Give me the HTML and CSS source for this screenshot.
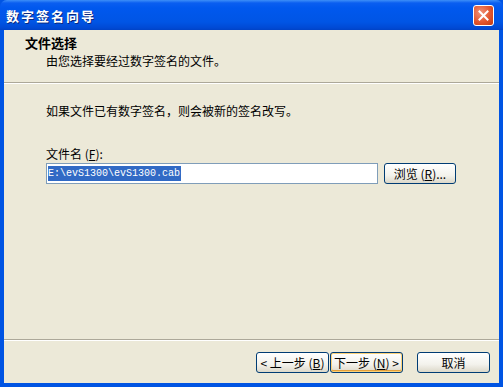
FILE: index.html
```html
<!DOCTYPE html>
<html lang="zh-CN">
<head>
    <meta charset="UTF-8">
    <title>数字签名向导</title>
    <link rel="stylesheet" href="styles.css">
</head>
<body>
    <div class="window">
        <div class="titlebar">
            <span class="title">数字签名向导</span>
            <button class="close" aria-label="关闭">
                <svg width="11" height="11" viewBox="0 0 11 11">
                    <path d="M1.5 1.5 L9.5 9.5 M9.5 1.5 L1.5 9.5" stroke="#fff" stroke-width="2" stroke-linecap="square"/>
                </svg>
            </button>
        </div>

        <div class="client">
            <div class="header">
                <div class="head-title">文件选择</div>
                <div class="head-sub">由您选择要经过数字签名的文件。</div>
            </div>
            <div class="etched"></div>

            <div class="content">
                <p class="note">如果文件已有数字签名，则会被新的签名改写。</p>
                <label class="label" for="fileName">文件名 (<u>F</u>):</label>
                <div class="file-row">
                    <div class="input" id="fileName"><span class="sel">E:\evS1300\evS1300.cab</span></div>
                    <button class="btn browse">浏览 (<u>R</u>)...</button>
                </div>
            </div>

            <div class="etched"></div>
            <div class="footer">
                <button class="btn">&lt; 上一步 (<u>B</u>)</button>
                <button class="btn default">下一步 (<u>N</u>) &gt;</button>
                <button class="btn cancel">取消</button>
            </div>
        </div>
    </div>
</body>
</html>
```

FILE: styles.css
```css
* {
    box-sizing: border-box;
}
html, body {
    margin: 0;
    padding: 0;
}
body {
    width: 503px;
    height: 387px;
    font-family: "Noto Sans CJK SC", "DejaVu Sans", sans-serif;
    font-size: 12px;
    color: #000;
    overflow: hidden;
}
.window {
    width: 503px;
    height: 387px;
    display: flex;
    flex-direction: column;
    background: #0054e3;
    padding: 0 4px 4px 4px;
}
.titlebar {
    height: 30px;
    margin: 0 -4px;
    padding: 0 9px 0 6px;
    display: flex;
    align-items: center;
    justify-content: space-between;
    background: linear-gradient(#3d8ff8 0, #0a5ef0 3px, #0058ee 8px, #0055e5 22px, #0049d4 28px, #0042c6 30px);
    border-radius: 7px 7px 0 0;
}
.title {
    color: #fff;
    font-weight: bold;
    font-size: 13px;
    letter-spacing: 2px;
    text-shadow: 1px 1px 0 #0a2a80;
}
.close {
    width: 21px;
    height: 21px;
    padding: 0;
    border: 1px solid #fff;
    border-radius: 3px;
    background: radial-gradient(circle at 35% 35%, #f0937a 0, #e2562f 55%, #c1390f 100%);
    display: flex;
    align-items: center;
    justify-content: center;
}
.client {
    flex: 1;
    display: flex;
    flex-direction: column;
    background: #ece9d8;
}
.header {
    height: 52px;
    padding: 5px 0 0 21px;
}
.head-title {
    font-weight: bold;
    font-size: 13px;
    line-height: 16px;
}
.head-sub {
    padding-left: 21px;
    margin-top: 3px;
    line-height: 14px;
}
.etched {
    height: 2px;
    border-top: 1px solid #aca899;
    border-bottom: 1px solid #fff;
}
.content {
    flex: 1;
    padding: 20px 0 0 42px;
}
.note {
    margin: 0 0 29px 0;
    line-height: 14px;
}
.label {
    display: block;
    line-height: 14px;
    margin-bottom: 2px;
}
.file-row {
    display: flex;
    align-items: center;
    gap: 6px;
}
.input {
    width: 332px;
    height: 21px;
    border: 1px solid #7f9db9;
    background: #fff;
    padding: 2px 0 0 1px;
    line-height: 15px;
    font-family: "Liberation Mono", "DejaVu Sans Mono", monospace;
    font-size: 10px;
}
.sel {
    background: #316ac5;
    color: #fff;
    padding: 2px 1px 2px 0;
}
.btn {
    font-family: inherit;
    font-size: 12px;
    height: 21px;
    width: 73px;
    padding: 0;
    border: 1px solid #003c74;
    border-radius: 3px;
    background: linear-gradient(#ffffff, #f3f2ec 60%, #dcd8c9);
    color: #000;
    line-height: 17px;
    white-space: nowrap;
}
.btn.default {
    box-shadow: inset 0 0 0 1px #fbd27a, inset 0 -1px 0 1px #e5a03a;
}
.browse {
    width: 72px;
}
.footer {
    height: 42px;
    padding: 11px 0 0 252px;
    display: flex;
    align-items: flex-start;
    gap: 1px;
}
.footer .cancel {
    margin-left: 13px;
}
u {
    text-decoration: underline;
}
```
